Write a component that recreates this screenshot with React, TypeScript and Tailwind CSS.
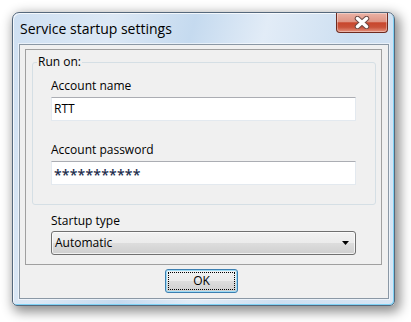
export default function App() {
  return (
    <div className="w-[411px] h-[322px] bg-white pl-[12px] pt-[12px] overflow-hidden font-['Open_Sans',sans-serif] text-black">
      <div className="flex flex-col w-[383px] h-[294px] rounded-t-[7px] rounded-b-[5px] border border-[#55687c] bg-[linear-gradient(105deg,#cfe0f2_0%,#dce8f5_22%,#c5daef_40%,#e2ecf7_56%,#cddff1_75%,#d9e6f4_100%)] shadow-[inset_1px_1px_0_rgba(255,255,255,0.75),inset_-1px_-1px_0_#7fd2f5,3px_4px_12px_2px_rgba(0,0,0,0.45)]">
        {/* Title bar */}
        <div className="flex h-[31px] items-start justify-between">
          <div className="pl-[7px] pt-[6px] text-[14px] leading-[20px] text-black">
            Service startup settings
          </div>
          <div className="mr-[6px] flex h-[20px] w-[52px] items-center justify-center rounded-b-[4px] border border-t-0 border-[#6e2a1f] bg-[linear-gradient(180deg,#eab3a6_0%,#df9585_45%,#c8462d_52%,#c9523a_75%,#e69480_100%)] shadow-[inset_0_0_0_1px_rgba(255,255,255,0.35)]">
            <svg width="16" height="13" viewBox="0 0 16 13">
              <path d="M3.5 2.5 L12.5 10.5 M12.5 2.5 L3.5 10.5" stroke="#6b4a45" strokeWidth="5.5" strokeLinecap="round" />
              <path d="M3.5 2.5 L12.5 10.5 M12.5 2.5 L3.5 10.5" stroke="#ffffff" strokeWidth="3.5" strokeLinecap="round" />
            </svg>
          </div>
        </div>

        {/* Client area */}
        <div className="ml-[6px] flex h-[255px] w-[370px] flex-col border border-[#8b98a5] bg-[#f0f0f0] shadow-[0_0_0_1px_rgba(255,255,255,0.55)]">
          {/* Inner panel */}
          <div className="ml-[5px] mt-[4px] flex h-[216px] w-[357px] flex-col border border-[#a0a0a0]">
            <fieldset className="ml-[6px] mt-[4px] w-[344px] rounded-[3px] border border-[#d5dfe5]">
              <legend className="ml-[4px] px-[1px] text-[12px] leading-[16px]">Run on:</legend>
              <div className="flex flex-col pl-[18px] pt-[8px] pb-[19px]">
                <div className="text-[12px] leading-[16px]">Account name</div>
                <div className="mt-[3px] flex h-[24px] w-[305px] items-center border border-[#e3e9ef] border-t-[#abadb3] bg-white pl-[2px] text-[12px] leading-[16px]">
                  RTT
                </div>
                <div className="mt-[21px] text-[12px] leading-[16px]">Account password</div>
                <div className="mt-[3px] flex h-[24px] w-[305px] items-center border border-[#e3e9ef] border-t-[#abadb3] bg-white pl-[2px] text-[14px] font-semibold leading-[16px] tracking-[0.2px] text-[#1c2c4c]">
                  <span className="pt-[3px]">***********</span>
                </div>
              </div>
            </fieldset>
            <div className="ml-[25px] mt-[8px] text-[12px] leading-[16px]">Startup type</div>
            <div className="ml-[25px] mt-[2px] flex h-[24px] w-[305px] items-center justify-between rounded-[3px] border border-[#707070] bg-[linear-gradient(180deg,#f2f2f2_0%,#ebebeb_50%,#dddddd_50%,#cfcfcf_100%)] pl-[3px] pr-[6px] text-[12px] leading-[16px] shadow-[inset_0_0_0_1px_rgba(255,255,255,0.7)]">
              <span>Automatic</span>
              <svg width="7" height="4" viewBox="0 0 7 4">
                <polygon points="0,0 7,0 3.5,4" fill="#000" />
              </svg>
            </div>
          </div>

          {/* OK button */}
          <div className="ml-[145px] mt-[4px] flex h-[24px] w-[73px] rounded-[3px] border border-[#3c7fb1] bg-[linear-gradient(180deg,#f2f2f2_0%,#ebebeb_50%,#dddddd_50%,#cfcfcf_100%)] shadow-[inset_0_0_0_1px_#9fdcf6]">
            <div className="m-[2px] flex flex-1 items-center justify-center border border-dotted border-black text-[12px] leading-[16px]">
              OK
            </div>
          </div>
        </div>
      </div>
    </div>
  );
}
